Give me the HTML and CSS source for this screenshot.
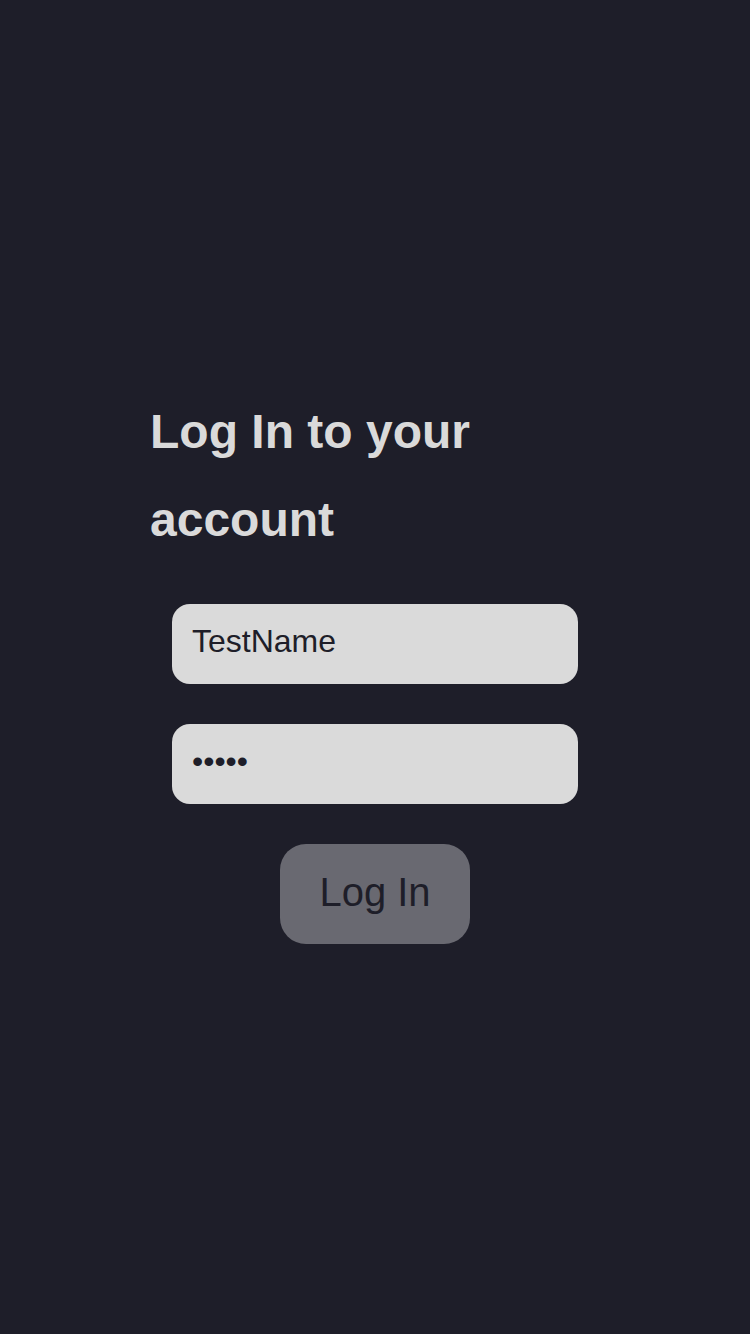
FILE: index.html
```html
<!DOCTYPE html>
<html lang="en">
<head>
<meta charset="utf-8">
<title>Log In</title>
<link rel="stylesheet" href="styles.css">
</head>
<body>
<main class="page">
  <form class="login">
    <h1 class="title">Log In to your account</h1>
    <input class="field" type="text" value="TestName">
    <input class="field" type="password" value="12345">
    <button class="btn" type="button">Log In</button>
  </form>
</main>
</body>
</html>
```

FILE: styles.css
```css
html, body {
  margin: 0;
  padding: 0;
  height: 100%;
  background: #1e1e29;
}
.page {
  box-sizing: border-box;
  height: 1334px;
  padding-bottom: 2px;
  display: flex;
  align-items: center;
  justify-content: center;
  font-family: "Liberation Sans", Arial, sans-serif;
}
.login {
  width: 450px;
  display: flex;
  flex-direction: column;
  align-items: center;
  gap: 40px;
}
.title {
  align-self: stretch;
  margin: 0;
  font-size: 48px;
  line-height: 88px;
  font-weight: 700;
  color: #dadada;
  width: 340px;
}
.field {
  box-sizing: border-box;
  width: 406px;
  height: 80px;
  border: none;
  border-radius: 18px;
  background: #dadada;
  padding: 0 20px 6px;
  font-family: "Liberation Sans", Arial, sans-serif;
  font-size: 32px;
  color: #1e1e29;
  outline: none;
}
.btn {
  box-sizing: border-box;
  width: 190px;
  height: 100px;
  border: none;
  border-radius: 26px;
  background: #696971;
  color: #1e1e29;
  font-family: "Liberation Sans", Arial, sans-serif;
  font-size: 40px;
  padding: 0 0 4px;
}
```
